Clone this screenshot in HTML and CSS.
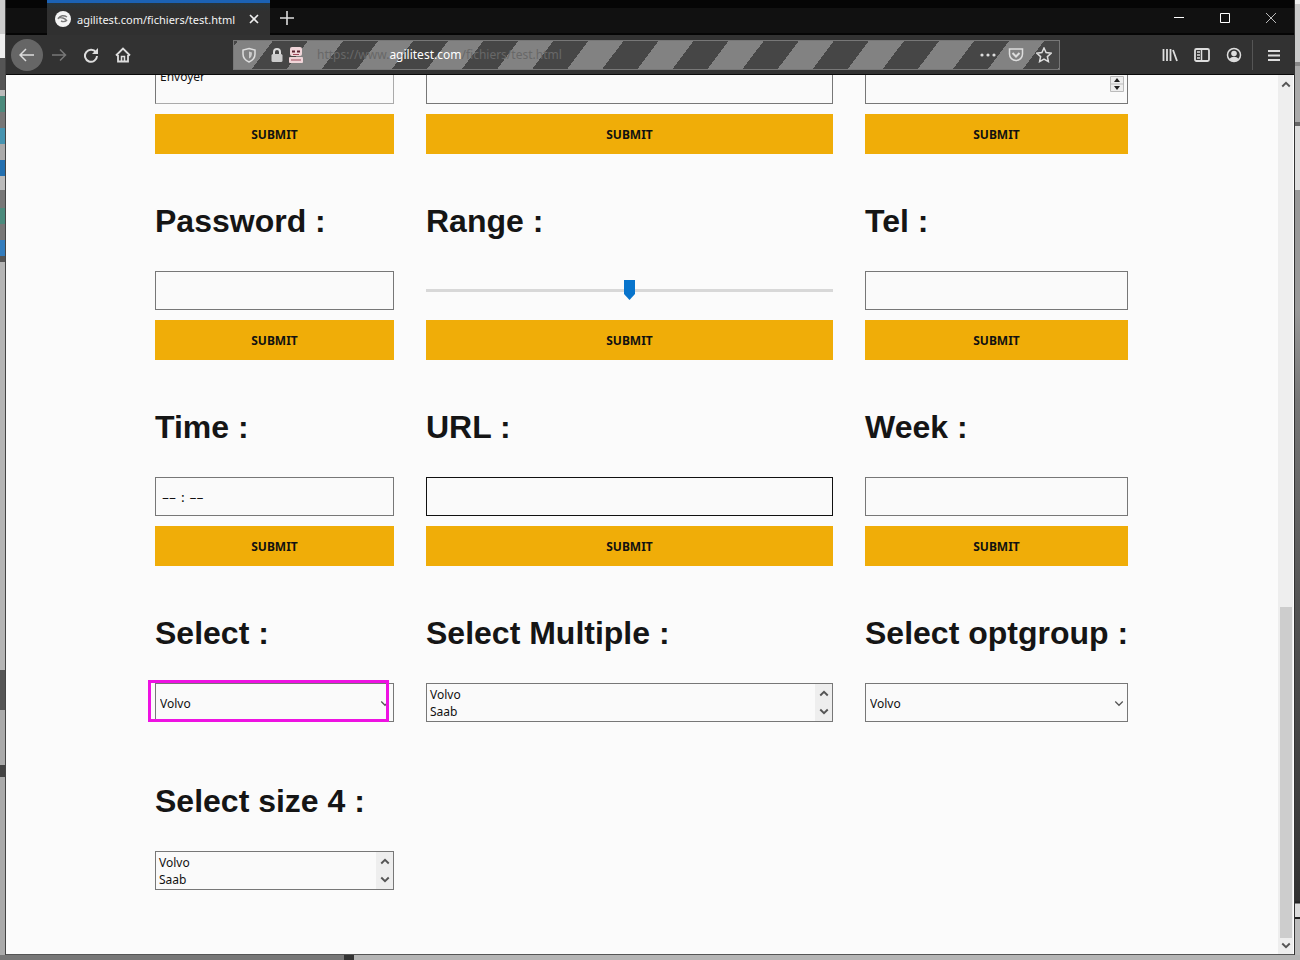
FILE: index.html
```html
<!DOCTYPE html>
<html lang="en">
<head>
<meta charset="utf-8">
<title>agilitest.com/fichiers/test.html</title>
<link rel="stylesheet" href="styles.css">
</head>
<body>
<div class="desktop">
<div class="edge edge-left"></div>
<div class="window">
  <header class="titlebar">
    <div class="tab">
      <svg class="favicon" viewBox="0 0 16 16"><circle cx="8" cy="8" r="8" fill="#f4f4f4"/><path d="M3 8c2-4 6-4 9-2M3 7c3-1 7 0 9 3M6 10c2 1 4 1 6-1" fill="none" stroke="#777" stroke-width="1.4"/></svg>
      <span class="tab-title">agilitest.com/fichiers/test.html</span>
      <button class="tab-close" aria-label="Close tab"><svg width="10" height="10" viewBox="0 0 10 10"><path d="M1 1l8 8M9 1L1 9" stroke="#eee" stroke-width="1.6"/></svg></button>
    </div>
    <button class="new-tab" aria-label="New tab"><svg width="14" height="14" viewBox="0 0 14 14"><path d="M7 0v14M0 7h14" stroke="#ddd" stroke-width="1.6"/></svg></button>
    <div class="controls">
      <button aria-label="Minimize"><svg width="12" height="12" viewBox="0 0 12 12"><path d="M1 5.500h10" stroke="#fff"/></svg></button>
      <button aria-label="Maximize"><svg width="12" height="12" viewBox="0 0 12 12"><path d="M1.500 1.500h9v9h-9z" fill="none" stroke="#fff"/></svg></button>
      <button aria-label="Close"><svg width="12" height="12" viewBox="0 0 12 12"><path d="M1 1l10 10M11 1L1 11" stroke="#bbb"/></svg></button>
    </div>
  </header>
  <nav class="toolbar">
    <button class="tool back" aria-label="Back"><svg viewBox="0 0 16 16"><path d="M15 8H1.500M7 2L1 8l6 6"/></svg></button>
    <button class="tool forward" aria-label="Forward"><svg viewBox="0 0 16 16"><path d="M1 8h13M9 2.500L14.500 8 9 13.500"/></svg></button>
    <button class="tool" aria-label="Reload"><svg viewBox="0 0 16 16"><path d="M13 5.500A6 6 0 1 0 14 9" stroke-width="2"/><path d="M15 1v6H9z" fill="#ddd" stroke="none"/></svg></button>
    <button class="tool" aria-label="Home"><svg viewBox="0 0 16 16"><path d="M1 8.500L8 1.500l7 7M3 8v6.500h10V8" stroke-width="1.800"/><path d="M6.500 14V9.500h3V14"/></svg></button>
    <div class="urlbar">
      <svg viewBox="0 0 16 16"><path d="M8 1.500l6 1.500v4c0 4-2.500 6.500-6 8-3.500-1.500-6-4-6-8V3z"/><path d="M8 4.500v7c2-1 3-2.500 3-6z" fill="#ccc" stroke="none"/></svg>
      <svg class="lock" viewBox="0 0 16 16"><path d="M5 8V5a3 3 0 0 1 6 0v3" stroke-width="2"/><rect x="2.500" y="7" width="11" height="8" rx="1.500" fill="#ccc" stroke="none"/></svg>
      <svg class="robot" viewBox="0 0 16 16"><rect x="2" y="0" width="12" height="9" rx="2" fill="#f0d5d9" stroke="none"/><rect x="1" y="10" width="14" height="6" rx="1" fill="#f0d5d9" stroke="none"/><path d="M4 4.500h3M9 4.500h3" stroke="#5c2432" stroke-width="2"/><path d="M5 7.500h6M3 13h10" stroke="#9d4a5b" stroke-width="1"/></svg>
      <span class="address"><span class="dim">https://www.</span>agilitest.com<span class="dim">/fichiers/test.html</span></span>
      <svg viewBox="0 0 16 16"><g fill="#ddd" stroke="none"><circle cx="2" cy="8" r="1.600"/><circle cx="8" cy="8" r="1.600"/><circle cx="14" cy="8" r="1.600"/></g></svg>
      <svg viewBox="0 0 16 16"><path d="M1.500 2h13v5a6.500 6.500 0 0 1-13 0z"/><path d="M4.500 6L8 9.500 11.500 6" stroke-width="2"/></svg>
      <svg viewBox="0 0 16 16"><path d="M8 1l2.100 4.600 5 .6-3.700 3.400 1 5L8 12.100l-4.400 2.500 1-5L.9 6.200l5-.6z"/></svg>
    </div>
    <button class="tool" aria-label="Library"><svg viewBox="0 0 16 16"><path d="M1.500 2v12M5 2v12M8.500 2v12M11 3l4 11" stroke-width="1.800"/></svg></button>
    <button class="tool" aria-label="Sidebar"><svg viewBox="0 0 16 16"><rect x="1" y="2" width="14" height="12" rx="1.500" stroke-width="1.800"/><path d="M7.500 2v12M3 5h3M3 8h3M3 11h3"/></svg></button>
    <button class="tool" aria-label="Account"><svg viewBox="0 0 16 16"><circle cx="8" cy="8" r="6.500"/><circle cx="8" cy="6.500" r="2.800" fill="#ddd" stroke="none"/><path d="M3.500 12c2-3 7-3 9 0-2 3-7 3-9 0z" fill="#ddd" stroke="none"/></svg></button>
    <span class="separator"></span>
    <button class="tool" aria-label="Menu"><svg viewBox="0 0 16 16"><path d="M2 4h12M2 8.500h12M2 13h12" stroke-width="1.800"/></svg></button>
  </nav>
  <div class="viewport">
    <main class="page">
      <div class="grid">
        <form class="cell"><textarea class="field light" aria-label="Text">Envoyer</textarea><button type="button" class="submit">SUBMIT</button></form>
        <form class="cell"><input class="field" type="text" aria-label="Text field"><button type="button" class="submit">SUBMIT</button></form>
        <form class="cell">
          <div class="wrap"><input class="field" type="text" inputmode="numeric" aria-label="Number"><span class="spinner"><svg width="14" height="16" viewBox="0 0 14 16"><path d="M.5.500h13v15H.500zM.5 8h13" fill="#eee" stroke="#bbb"/><path d="M4 6l3-4 3 4zM4 10l3 4 3-4z" fill="#222"/></svg></span></div>
          <button type="button" class="submit">SUBMIT</button></form>

        <form class="cell"><label class="title" for="password">Password :</label><input class="field" type="password" id="password"><button type="button" class="submit">SUBMIT</button></form>
        <form class="cell"><label class="title" for="range">Range :</label><input class="range" type="range" id="range"><button type="button" class="submit">SUBMIT</button></form>
        <form class="cell"><label class="title" for="tel">Tel :</label><input class="field" type="tel" id="tel"><button type="button" class="submit">SUBMIT</button></form>

        <form class="cell"><label class="title" for="time">Time :</label><input class="field time" type="text" id="time" value="–– : ––"><button type="button" class="submit">SUBMIT</button></form>
        <form class="cell"><label class="title" for="url">URL :</label><input class="field dark" type="url" id="url"><button type="button" class="submit">SUBMIT</button></form>
        <form class="cell"><label class="title" for="week">Week :</label><input class="field" type="text" id="week"><button type="button" class="submit">SUBMIT</button></form>

        <form class="cell"><label class="title" for="select">Select :</label>
          <div class="wrap"><select class="field" id="select"><option>Volvo</option><option>Saab</option></select><svg class="chevron" viewBox="0 0 8 6"><path d="M1 1l3 3 3-3"/></svg><span class="highlight"></span></div></form>
        <form class="cell"><label class="title" for="multiple">Select Multiple :</label>
          <div class="list"><select id="multiple" multiple size="2"><option>Volvo</option><option>Saab</option></select><span class="scroll"><svg viewBox="0 0 8 6"><path d="M1 5l3-3 3 3"/></svg><svg viewBox="0 0 8 6"><path d="M1 1l3 3 3-3"/></svg></span></div></form>
        <form class="cell"><label class="title" for="optgroup">Select optgroup :</label>
          <div class="wrap"><select class="field" id="optgroup"><optgroup label="Cars"><option>Volvo</option><option>Saab</option></optgroup></select><svg class="chevron" viewBox="0 0 8 6"><path d="M1 1l3 3 3-3"/></svg></div></form>

        <form class="cell"><label class="title" for="size4">Select size 4 :</label>
          <div class="list"><select id="size4" size="4"><option>Volvo</option><option>Saab</option></select><span class="scroll"><svg viewBox="0 0 8 6"><path d="M1 5l3-3 3 3"/></svg><svg viewBox="0 0 8 6"><path d="M1 1l3 3 3-3"/></svg></span></div></form>
      </div>
    </main>
    <div class="scrollbar"><svg viewBox="0 0 8 6"><path d="M1 5l3-3 3 3"/></svg><span class="thumb"></span><svg viewBox="0 0 8 6"><path d="M1 1l3 3 3-3"/></svg></div>
  </div>
</div>
<div class="edge edge-right"></div>
</div>
</body>
</html>
```
FILE: styles.css
```css
* { box-sizing: border-box; }
body { margin: 0; font-family: "Noto Sans", sans-serif; font-size: 12px; color: #111; }
button { border: 0; padding: 0; background: none; font: inherit; color: inherit; }
svg { display: block; flex: none; }

.desktop {
  display: grid;
  grid-template-columns: 6px 1fr 6px;
  height: 100vh;
  padding-bottom: 5px;
  overflow: hidden;
  background: linear-gradient(90deg, #777 0 344px, #333 344px 354px, #b5b5b5 354px);
}
.edge-left {
  border-right: 1px solid #444;
  background: linear-gradient(#ccc 0 34px, #eee 34px 58px, #555 58px 90px, #bbb 90px 96px, #4b8a7c 96px 112px, #777 112px 128px, #4794b0 128px 144px, #aaa 144px 160px, #2470b0 160px 176px, #bbb 176px 190px, #777 190px 208px, #4b8a7c 208px 224px, #777 224px 240px, #347dbd 240px 256px, #555 256px 262px, #b5b5b5 262px 670px, #555 670px 710px, #aaa 710px 765px, #444 765px 777px, #aaa 777px);
}
.edge-right {
  border-left: 1px solid #333;
  background: linear-gradient(#eee 0 4px, #ccc 4px 62px, #888 62px 66px, #aaa 66px 122px, #666 122px 126px, #ddd 126px 190px, #999 190px 310px, #777 400px, #555 600px, #333 900px, #222 903px, #ddd 904px 917px, #222 917px 919px, #bbb 919px);
}
.window { display: flex; flex-direction: column; min-width: 0; min-height: 0; border-bottom: 1px solid #555; }

.titlebar { display: flex; flex: none; height: 35px; padding-left: 41px; background: linear-gradient(#050505 0 8px, #111 8px 33px, #050505 33px); }
.tab { display: flex; align-items: center; width: 223px; padding: 0 6px 0 8px; border-top: 3px solid #1b62b5; background: linear-gradient(#26363f, #303030 8px); color: #f4f4f4; }
.favicon { width: 16px; height: 16px; margin-right: 6px; }
.tab-title { flex: 1; font-size: 11px; white-space: nowrap; }
.tab-close { display: grid; place-items: center; width: 20px; height: 20px; }
.new-tab { display: grid; place-items: center; width: 34px; }
.controls { display: flex; margin-left: auto; }
.controls button { display: grid; place-items: center; width: 46px; }

.toolbar { display: flex; flex: none; align-items: center; height: 40px; padding: 0 4px 0 5px; border-bottom: 1px solid #0a0a0a; background: #323232; }
.toolbar svg { width: 16px; height: 16px; fill: none; stroke: #ddd; stroke-width: 1.5; }
.tool { display: grid; place-items: center; flex: none; width: 32px; height: 32px; border-radius: 50%; }
.back { background: #666; }
.toolbar .forward svg { stroke: #777; }
.separator { width: 1px; height: 30px; margin: 0 5px 0 2px; background: #555; }
.urlbar {
  display: flex; flex: 1; align-items: center; height: 30px; min-width: 0;
  margin: 0 94px; padding: 0 7px; border: 1px solid #777;
  background: repeating-linear-gradient(127deg, #464646 0 3px, #828282 3px 31px, #464646 31px 56px);
}
.urlbar svg + svg { margin-left: 12px; }
.urlbar svg + .robot { margin-left: 3px; }
.address { flex: 1; margin-left: 13px; color: #fff; font-size: 12px; white-space: nowrap; }
.dim { color: #686868; }

.viewport { display: flex; flex: 1; min-height: 0; background: #fbfbfb; }
.page { flex: 1; overflow: hidden; padding: 0 150px 0 149px; }
.grid { display: grid; grid-template-columns: 239fr 407fr 263fr; column-gap: 32px; margin-top: -10px; }
.cell { display: flex; flex-direction: column; min-width: 0; }
.title { margin: 47px 0 30px; font: bold 32px/40px "Liberation Sans", Arial, sans-serif; color: #151515; white-space: nowrap; }
.field, .list, .range { width: 100%; height: 39px; margin: 0 0 10px; }
.field, .list { display: block; border: 1px solid #777; border-radius: 0; background: #fafafa; }
.field { padding: 0 4px; font: 12px/16px "Noto Sans", sans-serif; color: #111; appearance: none; outline: 0; resize: none; }
select.field { padding-top: 2px; }
textarea.field { padding-top: 3px; overflow: hidden; }
.field.light { border-color: #aaa; border-left-color: #777; }
.field.dark { border-color: #111; }
.time { padding-left: 6px; font: 14px/16px "DejaVu Sans", sans-serif; }
.submit { height: 40px; background: #f0ad08; font-weight: bold; text-align: center; }
.wrap { position: relative; }
.spinner { position: absolute; right: 4px; top: 11px; }
.chevron { position: absolute; right: 4px; top: 17px; }
.chevron, .scroll svg, .scrollbar svg { width: 10px; height: 8px; fill: none; stroke: #555; stroke-width: 1.5; }
.chevron { stroke-width: 1; }
.highlight { position: absolute; top: -3px; left: -7px; right: 5px; height: 42px; border: 3px solid #ee12e2; pointer-events: none; }
.list { display: flex; overflow: hidden; margin-bottom: 12px; }
.list select { flex: 1; height: 37px; padding: 2px 1px 0; border: 0; background: none; font: 12px/16px "Noto Sans", sans-serif; color: #111; overflow: hidden; outline: 0; }
.list option { min-height: 16px; padding: 0 2px; line-height: 16px; }
.scroll { display: flex; flex-direction: column; justify-content: space-between; align-items: center; width: 17px; padding: 5px 0; background: #eee; }

.range { appearance: none; background: none; }
.range::-webkit-slider-runnable-track { height: 3px; background: #d8d8d8; }
.range::-webkit-slider-thumb { appearance: none; width: 11px; height: 20px; margin-top: -9px; background: #0874cc; clip-path: polygon(0 0, 100% 0, 100% 70%, 50% 100%, 0 70%); }

.scrollbar { display: flex; flex-direction: column; align-items: center; width: 16px; padding: 5px 0 4px; border-right: 1px solid #fff; background: #eee; }
.thumb { flex: none; width: 12px; height: 38%; margin: auto 0 4px; background: #cdcdcd; }
```
